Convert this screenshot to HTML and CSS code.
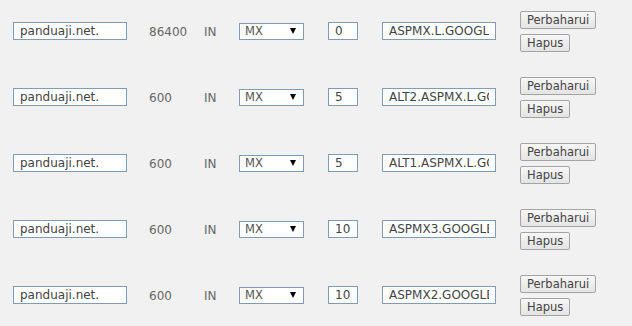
FILE: index.html
```html
<!DOCTYPE html>
<html lang="id">
<head>
<meta charset="utf-8">
<title>DNS MX Records</title>
<link rel="stylesheet" href="styles.css">
</head>
<body>
<div class="records">
  <div class="record">
    <input class="field field-name" type="text" value="panduaji.net.">
    <span class="cell">86400</span>
    <span class="cell">IN</span>
    <span class="select-wrap"><select class="type"><option>MX</option></select></span>
    <input class="field field-prio" type="text" value="0">
    <input class="field field-data" type="text" value="ASPMX.L.GOOGLE.COM.">
    <div class="actions"><button class="btn">Perbaharui</button><button class="btn">Hapus</button></div>
  </div>
  <div class="record">
    <input class="field field-name" type="text" value="panduaji.net.">
    <span class="cell">600</span>
    <span class="cell">IN</span>
    <span class="select-wrap"><select class="type"><option>MX</option></select></span>
    <input class="field field-prio" type="text" value="5">
    <input class="field field-data" type="text" value="ALT2.ASPMX.L.GOOGLE.COM.">
    <div class="actions"><button class="btn">Perbaharui</button><button class="btn">Hapus</button></div>
  </div>
  <div class="record">
    <input class="field field-name" type="text" value="panduaji.net.">
    <span class="cell">600</span>
    <span class="cell">IN</span>
    <span class="select-wrap"><select class="type"><option>MX</option></select></span>
    <input class="field field-prio" type="text" value="5">
    <input class="field field-data" type="text" value="ALT1.ASPMX.L.GOOGLE.COM.">
    <div class="actions"><button class="btn">Perbaharui</button><button class="btn">Hapus</button></div>
  </div>
  <div class="record">
    <input class="field field-name" type="text" value="panduaji.net.">
    <span class="cell">600</span>
    <span class="cell">IN</span>
    <span class="select-wrap"><select class="type"><option>MX</option></select></span>
    <input class="field field-prio" type="text" value="10">
    <input class="field field-data" type="text" value="ASPMX3.GOOGLEMAIL.COM.">
    <div class="actions"><button class="btn">Perbaharui</button><button class="btn">Hapus</button></div>
  </div>
  <div class="record">
    <input class="field field-name" type="text" value="panduaji.net.">
    <span class="cell">600</span>
    <span class="cell">IN</span>
    <span class="select-wrap"><select class="type"><option>MX</option></select></span>
    <input class="field field-prio" type="text" value="10">
    <input class="field field-data" type="text" value="ASPMX2.GOOGLEMAIL.COM.">
    <div class="actions"><button class="btn">Perbaharui</button><button class="btn">Hapus</button></div>
  </div>
</div>
</body>
</html>
```

FILE: styles.css
```css
html, body {
  margin: 0;
  padding: 0;
  background: #f1f1f1;
  font-family: "DejaVu Sans", Verdana, sans-serif;
  color: #666;
}

.records {
  display: grid;
  grid-template-columns: 136px 55px 35px 89px 54px 138px auto;
  grid-auto-rows: 62px;
  row-gap: 4px;
  padding-left: 13px;
  align-items: center;
}

.record {
  display: contents;
}

.field {
  display: block;
  box-sizing: border-box;
  height: 18px;
  margin: 0;
  padding: 0 6px;
  border: 1px solid #7f9db9;
  background: #fff;
  color: #444;
  font-family: "DejaVu Sans", Verdana, sans-serif;
  font-size: 12px;
  outline: none;
}

.field-name,
.field-data {
  width: 114px;
}

.field-prio {
  width: 30px;
}

.cell {
  display: block;
  font-family: "DejaVu Sans", Verdana, sans-serif;
  font-size: 12px;
  color: #666;
  line-height: 14px;
  padding-top: 1px;
}

.select-wrap {
  position: relative;
  display: block;
  width: 65px;
  height: 17px;
}

.select-wrap::after {
  content: "";
  position: absolute;
  right: 8px;
  top: 5px;
  border-left: 3px solid transparent;
  border-right: 3px solid transparent;
  border-top: 6px solid #000;
  pointer-events: none;
}

.type {
  display: block;
  -webkit-appearance: none;
  appearance: none;
  box-sizing: border-box;
  width: 65px;
  height: 17px;
  margin: 0;
  padding: 0 0 0 5px;
  border: 1px solid #7f9db9;
  border-radius: 0;
  background: #fff;
  color: #555;
  font-family: "DejaVu Sans", Verdana, sans-serif;
  font-size: 11.5px;
  line-height: 15px;
  outline: none;
}

.actions {
  display: flex;
  flex-direction: column;
  align-items: flex-start;
  gap: 5px;
}

.btn {
  box-sizing: border-box;
  height: 18px;
  margin: 0;
  padding: 0 6px;
  border: 1px solid #a3a3a3;
  border-radius: 2px;
  background: linear-gradient(#f7f7f7, #e4e4e4);
  color: #444;
  font-family: "DejaVu Sans", Verdana, sans-serif;
  font-size: 11.5px;
  line-height: 16px;
}
```
